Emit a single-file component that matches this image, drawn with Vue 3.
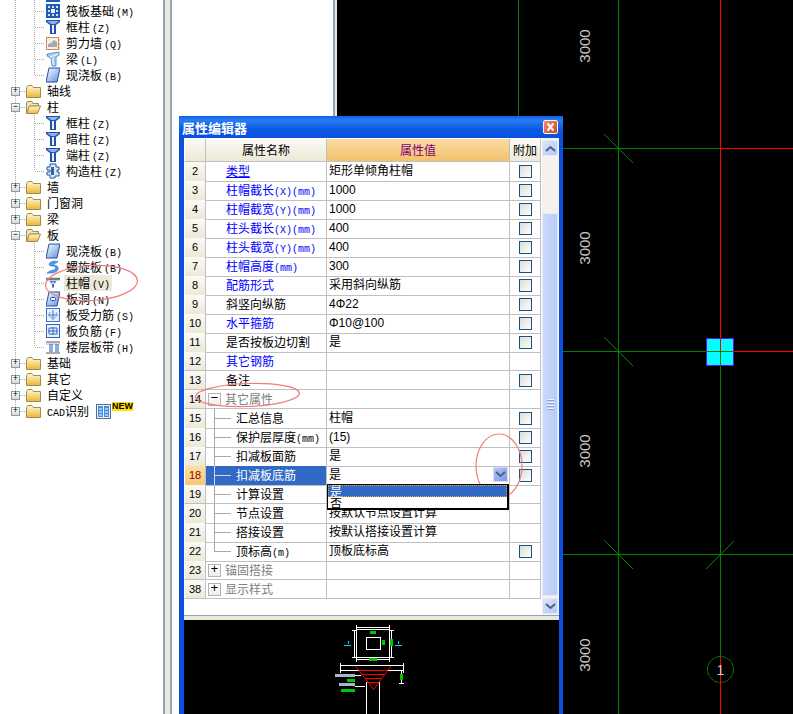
<script setup>
const tree = [
  { type: 'leaf', icon: 'raft', label: '' },
  { type: 'leaf', icon: 'raft', label: '筏板基础', key: '(M)' },
  { type: 'leaf', icon: 'col', label: '框柱', key: '(Z)' },
  { type: 'leaf', icon: 'wall', label: '剪力墙', key: '(Q)' },
  { type: 'leaf', icon: 'beam', label: '梁', key: '(L)' },
  { type: 'leaf', icon: 'slab', label: '现浇板', key: '(B)' },
  { type: 'folder', label: '轴线' },
  { type: 'folder', open: true, label: '柱' },
  { type: 'leaf', icon: 'col', label: '框柱', key: '(Z)' },
  { type: 'leaf', icon: 'col', label: '暗柱', key: '(Z)' },
  { type: 'leaf', icon: 'col', label: '端柱', key: '(Z)' },
  { type: 'leaf', icon: 'constr', label: '构造柱', key: '(Z)' },
  { type: 'folder', label: '墙' },
  { type: 'folder', label: '门窗洞' },
  { type: 'folder', label: '梁' },
  { type: 'folder', open: true, label: '板' },
  { type: 'leaf', icon: 'slab', label: '现浇板', key: '(B)' },
  { type: 'leaf', icon: 'spiral', label: '螺旋板', key: '(B)' },
  { type: 'leaf', icon: 'cap', label: '柱帽', key: '(V)', selected: true },
  { type: 'leaf', icon: 'hole', label: '板洞', key: '(N)' },
  { type: 'leaf', icon: 'rebar', label: '板受力筋', key: '(S)' },
  { type: 'leaf', icon: 'neg', label: '板负筋', key: '(F)' },
  { type: 'leaf', icon: 'band', label: '楼层板带', key: '(H)' },
  { type: 'folder', label: '基础' },
  { type: 'folder', label: '其它' },
  { type: 'folder', label: '自定义' },
  { type: 'folder', prefix: 'CAD', label: '识别', isNew: true }
]

// y centre of each tree row, used for the dotted connectors
const rowY = (i) => i * 16 - 5
const leafRows = tree.map((t, i) => (t.type === 'leaf' ? rowY(i) : null)).filter((v) => v !== null && v > 0)
const folderRows = tree.map((t, i) => (t.type === 'folder' ? rowY(i) : null)).filter((v) => v !== null)

const rows = [
  { no: 2, name: '类型', link: true, under: true, val: '矩形单倾角柱帽', chk: true },
  { no: 3, name: '柱帽截长', unit: '(X)(mm)', link: true, val: '1000', chk: true },
  { no: 4, name: '柱帽截宽', unit: '(Y)(mm)', link: true, val: '1000', chk: true },
  { no: 5, name: '柱头截长', unit: '(X)(mm)', link: true, val: '400', chk: true },
  { no: 6, name: '柱头截宽', unit: '(Y)(mm)', link: true, val: '400', chk: true },
  { no: 7, name: '柱帽高度', unit: '(mm)', link: true, val: '300', chk: true },
  { no: 8, name: '配筋形式', link: true, val: '采用斜向纵筋', chk: true },
  { no: 9, name: '斜竖向纵筋', val: '4Φ22', chk: true },
  { no: 10, name: '水平箍筋', link: true, val: 'Φ10@100', chk: true },
  { no: 11, name: '是否按板边切割', val: '是', chk: true },
  { no: 12, name: '其它钢筋', link: true, val: '' },
  { no: 13, name: '备注', val: '', chk: true },
  { no: 14, name: '其它属性', group: '−', val: '' },
  { no: 15, name: '汇总信息', child: true, val: '柱帽', chk: true },
  { no: 16, name: '保护层厚度', unit: '(mm)', child: true, val: '(15)', chk: true },
  { no: 17, name: '扣减板面筋', child: true, val: '是', chk: true },
  { no: 18, name: '扣减板底筋', child: true, val: '是', chk: true, active: true },
  { no: 19, name: '计算设置', child: true, val: '' },
  { no: 20, name: '节点设置', child: true, val: '按默认节点设置计算', under_drop: true },
  { no: 21, name: '搭接设置', child: true, val: '按默认搭接设置计算' },
  { no: 22, name: '顶标高', unit: '(m)', child: true, last: true, val: '顶板底标高', chk: true },
  { no: 23, name: '锚固搭接', group: '+', val: '' },
  { no: 38, name: '显示样式', group: '+', val: '' }
]

const dimTexts = [46, 248, 451, 655]
const ticks = [
  [604, 134, 633, 163],
  [604, 337, 633, 366],
  [604, 540, 633, 569],
  [706, 569, 734, 541]
]
</script>

<template>
  <div class="screen">
    <svg class="sprite" width="0" height="0" aria-hidden="true">
      <defs>
        <linearGradient id="gBlue" x1="0" y1="0" x2="1" y2="0">
          <stop offset="0" stop-color="#1f4fa8" />
          <stop offset="0.5" stop-color="#d9e6fb" />
          <stop offset="1" stop-color="#1f4fa8" />
        </linearGradient>
        <linearGradient id="gSlab" x1="0" y1="0" x2="1" y2="1">
          <stop offset="0" stop-color="#ffffff" />
          <stop offset="1" stop-color="#5d8fe0" />
        </linearGradient>
        <linearGradient id="gFolder" x1="0" y1="0" x2="0" y2="1">
          <stop offset="0" stop-color="#fff8d8" />
          <stop offset="1" stop-color="#eeb730" />
        </linearGradient>
      </defs>
      <symbol id="i-raft" viewBox="0 0 14 16">
        <rect x="0" y="1" width="14" height="14" fill="#1d5cb0" />
        <rect x="2" y="3" width="2" height="2" fill="#cfe0f8" /><rect x="6" y="3" width="2" height="2" fill="#cfe0f8" /><rect x="10" y="3" width="2" height="2" fill="#cfe0f8" />
        <rect x="2" y="7" width="2" height="2" fill="#cfe0f8" /><rect x="5" y="6" width="4" height="4" fill="#eaf2ff" /><rect x="10" y="7" width="2" height="2" fill="#cfe0f8" />
        <rect x="2" y="11" width="2" height="2" fill="#cfe0f8" /><rect x="6" y="11" width="2" height="2" fill="#cfe0f8" /><rect x="10" y="11" width="2" height="2" fill="#cfe0f8" />
      </symbol>
      <symbol id="i-col" viewBox="0 0 14 16">
        <path d="M0 1H14V3L10 6V15H4V6L0 3Z" fill="#1f52ae" />
        <path d="M1 2H13L9 5H5Z" fill="#8fb2ea" />
        <rect x="6" y="6" width="2" height="8" fill="#e9f1fd" />
      </symbol>
      <symbol id="i-wall" viewBox="0 0 14 16">
        <rect x="0.5" y="2.5" width="12" height="12" fill="#f4f0e8" stroke="#d58a58" />
        <path d="M2 12L11 12L11 7L8 5L5 8L2 9Z" fill="#a9a9a9" />
        <path d="M12 5H14M12 9H14M12 13H14" stroke="#d07a30" />
      </symbol>
      <symbol id="i-beam" viewBox="0 0 14 16">
        <path d="M1 3L13 1V4L10 6V15H6L5 7L1 5Z" fill="#a8cdf2" stroke="#3d82c8" stroke-width="0.8" />
        <path d="M7 7V14M4 6L12 3" stroke="#ffffff" />
      </symbol>
      <symbol id="i-slab" viewBox="0 0 14 16">
        <path d="M3 1H14L11 15H0Z" fill="url(#gSlab)" stroke="#1d4fa8" />
      </symbol>
      <symbol id="i-constr" viewBox="0 0 14 16">
        <path d="M4 1H10V4H13V7H11V9H13V13H9V15H4V12H1V9H4V7H1V4H4Z" fill="#dfe9f8" stroke="#27549e" />
        <rect x="5" y="4" width="3" height="8" fill="#2c62b8" />
      </symbol>
      <symbol id="i-spiral" viewBox="0 0 16 16">
        <path d="M14 2C8 0 2 3 4 6C6 8 11 6 11 9C11 12 5 11 1 15C6 15 13 15 14 10C15 6 9 6 8 5C8 4 12 4 14 2Z" fill="#4f9be8" stroke="#1f62c0" stroke-width="0.6" />
      </symbol>
      <symbol id="i-cap" viewBox="0 0 16 16">
        <rect x="0" y="2" width="16" height="3" fill="#7a7a7a" />
        <path d="M4 6H12L9 9V13H7V9Z" fill="#2358b4" />
        <rect x="7" y="7" width="2" height="2" fill="#ffffff" />
      </symbol>
      <symbol id="i-hole" viewBox="0 0 14 16">
        <path d="M3 1H14L11 15H0Z" fill="url(#gSlab)" stroke="#1d4fa8" />
        <rect x="4.5" y="6.5" width="5" height="3" rx="1" fill="#ffffff" stroke="#1d4fa8" />
      </symbol>
      <symbol id="i-rebar" viewBox="0 0 14 16">
        <rect x="0.5" y="1.5" width="13" height="13" fill="#e8f0fc" stroke="#3b74c8" />
        <path d="M7 3V13M2 8H12" stroke="#3b74c8" />
        <path d="M4 5C2 8 4 11 7 11C10 11 12 8 10 5" fill="none" stroke="#7da3dc" />
      </symbol>
      <symbol id="i-neg" viewBox="0 0 14 16">
        <rect x="0.5" y="1.5" width="13" height="13" fill="#e8f0fc" stroke="#2f67c0" />
        <path d="M2 8H12M7 4V12M3 5H11V11H3Z" fill="none" stroke="#2f67c0" />
      </symbol>
      <symbol id="i-band" viewBox="0 0 14 16">
        <path d="M0 3H14M0 14H14" stroke="#555555" />
        <path d="M0 5H14" stroke="#9ab4d8" />
        <path d="M4 5V13M10 5V13M6 5V13M12 5V13" stroke="#1d5cb0" />
      </symbol>
      <symbol id="i-grid" viewBox="0 0 15 15">
        <rect x="0.5" y="0.5" width="14" height="14" fill="#eef3fb" stroke="#5a6b80" />
        <rect x="2" y="2" width="5" height="11" fill="#3f8fe8" /><rect x="8" y="2" width="5" height="11" fill="#3f8fe8" />
        <path d="M3 5H6M3 8H6M3 11H6M9 5H12M9 8H12M9 11H12" stroke="#ffffff" />
      </symbol>
      <symbol id="i-chev" viewBox="0 0 11 7">
        <path d="M1 1L5.5 5L10 1" fill="none" stroke="#4d6185" stroke-width="2" />
      </symbol>
    </svg>

    <div class="panel tree-panel">
      <svg class="tree-lines" width="164" height="430">
        <path d="M15.5 0V411M34.5 0V75M34.5 107V171M34.5 235V347" stroke="#a8a8a8" stroke-dasharray="1 1" fill="none" />
        <path v-for="y in leafRows" :key="'l' + y" :d="`M35 ${y + 0.5}H45`" stroke="#a8a8a8" stroke-dasharray="1 1" />
        <path v-for="y in folderRows" :key="'f' + y" :d="`M20 ${y + 0.5}H26`" stroke="#a8a8a8" stroke-dasharray="1 1" />
      </svg>
      <ul class="tree">
        <li v-for="(t, i) in tree" :key="i" class="node" :class="t.type">
          <template v-if="t.type === 'folder'">
            <span class="expander">{{ t.open ? '−' : '+' }}</span>
            <svg class="folder-icon" width="15" height="14" viewBox="0 0 15 14">
              <path v-if="!t.open" d="M0.5 3.5L2 1.5H6L7.5 3.5H14.5V13.5H0.5Z" fill="url(#gFolder)" stroke="#a08a50" />
              <template v-else>
                <path d="M0.5 2.5L2 1.5H6L7 3.5H12.5V6H3.5L0.5 13Z" fill="#f2e4b4" stroke="#a08a50" />
                <path d="M0.5 13.5L3.5 6H14.5L11.5 13.5Z" fill="url(#gFolder)" stroke="#a08a50" />
              </template>
            </svg>
          </template>
          <svg v-else class="leaf-icon" width="14" height="16"><use :href="'#i-' + t.icon" /></svg>
          <span v-if="t.label" class="label" :class="{ selected: t.selected }"><span v-if="t.prefix" class="prefix">{{ t.prefix }}</span>{{ t.label }}<span v-if="t.key" class="latin">{{ t.key }}</span></span>
          <template v-if="t.isNew">
            <svg class="new-grid" width="15" height="15"><use href="#i-grid" /></svg>
            <span class="new-tag">NEW</span>
          </template>
        </li>
      </ul>
    </div>
    <div class="splitter wide"></div>
    <div class="panel mid-panel"></div>
    <div class="splitter"></div>

    <div class="cad">
      <svg class="cad-lines" width="456" height="714" viewBox="337 0 456 714">
        <g shape-rendering="crispEdges" fill="none">
          <path d="M518.5 0V714M618.5 0V714" stroke="#008000" />
          <path d="M337 148.5H720M337 351.5H733M337 554.5H793M720.5 365V656" stroke="#008000" />
          <path d="M720 148.5H793M733 351.5H793M720.5 0V338M720.5 656V714" stroke="#ff0000" />
        </g>
        <path v-for="(d, i) in ticks" :key="i" :d="`M${d[0]} ${d[1]}L${d[2]} ${d[3]}`" stroke="#008000" fill="none" />
        <rect x="706.5" y="338.5" width="27" height="27" fill="#00ffff" stroke="#8000ff" />
        <path d="M720.5 339V351.5" stroke="#ff0000" shape-rendering="crispEdges" />
        <path d="M707 351.5H733M720.5 351.5V365" stroke="#008000" shape-rendering="crispEdges" />
        <circle cx="720.5" cy="669.5" r="13" fill="none" stroke="#008000" stroke-dasharray="5 0.6" />
        <text x="720.5" y="675" class="cad-num" font-size="14">1</text>
        <text
          v-for="y in dimTexts"
          :key="y"
          class="cad-num"
          font-size="15"
          :transform="`translate(590 ${y}) rotate(-90)`"
        >3000</text>
      </svg>
    </div>

    <section class="dialog">
      <header class="titlebar">
        <span class="title">属性编辑器</span>
        <button class="close">
          <svg width="13" height="12" viewBox="0 0 13 12"><path d="M3.5 2.5L9.5 9.5M9.5 2.5L3.5 9.5" stroke="#ffffff" stroke-width="2" /></svg>
        </button>
      </header>
      <div class="client">
        <div class="grid-area">
          <div class="grid">
            <div class="row head">
              <div class="cell no"></div>
              <div class="cell hname">属性名称</div>
              <div class="cell hval">属性值</div>
              <div class="cell hadd">附加</div>
            </div>
            <div v-for="r in rows" :key="r.no" class="row" :class="{ active: r.active }">
              <div class="cell no">{{ r.no }}</div>
              <div class="cell name" :class="{ link: r.link, child: r.child, last: r.last, group: r.group }">
                <span v-if="r.group" class="box">{{ r.group }}</span>
                <span :class="{ under: r.under }">{{ r.name }}</span><span v-if="r.unit" class="latin">{{ r.unit }}</span>
              </div>
              <div class="cell val" :class="{ clipped: r.under_drop }">
                {{ r.val }}
                <template v-if="r.active">
                  <span class="drop-btn"><svg width="11" height="7"><use href="#i-chev" /></svg></span>
                  <div class="dropdown">
                    <div class="opt on">是</div>
                    <div class="opt">否</div>
                  </div>
                </template>
              </div>
              <div class="cell add"><span v-if="r.chk" class="chk"></span></div>
            </div>
          </div>
          <div class="scroll">
            <span class="sbtn"><svg width="11" height="7" class="flip"><use href="#i-chev" /></svg></span>
            <div class="thumb"><i></i><i></i><i></i><i></i></div>
            <span class="sbtn"><svg width="11" height="7"><use href="#i-chev" /></svg></span>
          </div>
        </div>
        <div class="preview">
          <svg width="375" height="94" viewBox="184 620 375 94" shape-rendering="crispEdges">
            <g fill="none" stroke="#ffffff">
              <rect x="356.5" y="629.5" width="33" height="28" />
              <rect x="366.5" y="637.5" width="14" height="12" />
              <path d="M356 627.5H389M356 625V630M389 625V630M354.5 630V657M352 630H357M352 657H357" />
              <path d="M391.5 630V657M389 630H394M389 657H394M356 659.5H389M356 657V662M389 657V662" />
              <path d="M340 665.5H404M340 670.5H404M340.5 663V673M403.5 663V673M366.5 682V714M379.5 682V714" />
              <path d="M355 675.5H361M355 686.5H365M401.5 670V683M399 683.5H404" />
            </g>
            <g fill="none" stroke="#ff0000">
              <path d="M355.5 666L373.5 689.5L391 666" shape-rendering="auto" />
              <path d="M359 670.5H388M362 674.5H385M365 678.5H382M367 682.5H379" />
            </g>
            <g fill="#00c800">
              <rect x="370" y="631" width="6" height="3" />
              <rect x="382" y="640" width="3" height="5" />
              <rect x="390" y="639" width="3" height="7" />
              <rect x="369" y="658" width="8" height="3" />
              <rect x="400" y="674" width="3" height="6" />
              <rect x="347" y="679" width="8" height="3" />
              <rect x="341" y="689" width="14" height="3" />
            </g>
            <rect x="335" y="674" width="20" height="3" fill="#a9b6c4" />
            <rect x="339" y="683" width="16" height="3" fill="#a9b6c4" />
            <path d="M348 641V644M344 645.5H351M398 641V644M395 645.5H402" stroke="#00e0e0" fill="none" />
          </svg>
        </div>
      </div>
    </section>

    <svg class="marks" width="793" height="714">
      <g fill="none" stroke="#f27c7c" stroke-width="1.2">
        <ellipse cx="91.5" cy="283" rx="46" ry="17.5" transform="rotate(-3 91.5 283)" />
        <ellipse cx="247.5" cy="395" rx="52" ry="11.5" transform="rotate(-2 247.5 395)" />
        <ellipse cx="499" cy="466" rx="23" ry="32" />
      </g>
    </svg>
  </div>
</template>

<style>
html, body {
  margin: 0;
  background: #fff;
  overflow: hidden;
}
</style>

<style scoped>
.screen {
  position: relative;
  display: flex;
  width: 793px;
  height: 714px;
  overflow: hidden;
  font: 12px "Noto Sans CJK SC", "Liberation Sans", sans-serif;
  color: #000;
  background: #fff;
}
.sprite {
  position: absolute;
}
.panel {
  background: #fff;
  box-sizing: border-box;
  height: 100%;
}
.tree-panel {
  position: relative;
  width: 165px;
  border-right: 2px solid #8ea4c0;
  overflow: hidden;
}
.mid-panel {
  width: 165px;
  border-left: 2px solid #8ea4c0;
  border-right: 2px solid #8ea4c0;
}
.splitter {
  width: 2px;
  background: #ece9d8;
}
.splitter.wide {
  width: 5px;
}
.tree-lines {
  position: absolute;
  left: 0;
  top: 0;
}
.tree {
  position: relative;
  list-style: none;
  margin: -13px 0 0;
  padding: 0;
}
.node {
  display: flex;
  align-items: center;
  height: 16px;
  white-space: nowrap;
}
.node.leaf {
  padding-left: 46px;
}
.node.folder {
  padding-left: 11px;
}
.leaf-icon {
  flex: none;
}
.expander {
  flex: none;
  box-sizing: border-box;
  width: 9px;
  height: 9px;
  border: 1px solid #8a9bb0;
  background: linear-gradient(#fff, #dcd8c8);
  font: 9px/7px "Liberation Mono", monospace;
  text-align: center;
  margin-right: 6px;
}
.folder-icon {
  flex: none;
}
.label {
  height: 16px;
  line-height: 15px;
  padding: 0 2px;
  margin-left: 4px;
}
.folder .label {
  margin-left: 4px;
}
.label.selected {
  background: #ece9d8;
}
.prefix {
  font: 10px "Liberation Mono", monospace;
}
.latin {
  font: 10px "Liberation Mono", monospace;
}
.label .latin {
  margin-left: 2px;
}
.new-grid {
  flex: none;
  margin-left: 5px;
  margin-top: 1px;
}
.new-tag {
  align-self: flex-start;
  margin-top: -1px;
  margin-left: 1px;
  background: #ffe000;
  font: bold 9px/9px "Liberation Sans", sans-serif;
}
.cad {
  flex: 1;
  background: #000;
  overflow: hidden;
}
.cad-lines {
  display: block;
}
.cad-num {
  fill: #c8c8c8;
  font-family: "Liberation Sans", sans-serif;
  text-anchor: middle;
}
.dialog {
  position: absolute;
  left: 179px;
  top: 116px;
  box-sizing: border-box;
  display: flex;
  flex-direction: column;
  width: 384px;
  height: 598px;
  padding: 0 4px 0 5px;
  background: linear-gradient(90deg, #0a3fc4, #0a56ee 2px, #0a50e0 4px);
  background-color: #0a50e0;
}
.titlebar {
  display: flex;
  align-items: center;
  justify-content: space-between;
  flex: none;
  height: 22px;
  margin: 0 -4px 0 -5px;
  padding: 0 5px 0 3px;
  background: linear-gradient(#0d5fe6, #2a7bf2 18%, #0a5ae6 60%, #0a4fdc);
}
.title {
  color: #fff;
  font-size: 13px;
  font-weight: 700;
}
.close {
  display: flex;
  align-items: center;
  justify-content: center;
  width: 13px;
  height: 12px;
  padding: 0;
  border: 1px solid #f4f4f4;
  border-radius: 2px;
  box-sizing: content-box;
  background: linear-gradient(135deg, #ec9070, #d8431c);
}
.client {
  flex: 1;
  display: flex;
  flex-direction: column;
  min-height: 0;
  background: #ece9d8;
}
.grid-area {
  flex: none;
  display: flex;
  height: 478px;
  box-sizing: border-box;
  background: #fff;
  border-bottom: 1px solid #8ea4b8;
}
.grid {
  width: 358px;
  flex: none;
}
.row {
  display: grid;
  grid-template-columns: 22px 121px 183px 31px;
  height: 19px;
}
.row.head {
  height: 24px;
  padding-top: 1px;
  box-sizing: border-box;
}
.cell {
  box-sizing: border-box;
  border-right: 1px solid #c0c0c0;
  border-bottom: 1px solid #c0c0c0;
  line-height: 18px;
  white-space: nowrap;
  min-width: 0;
}
.head .cell {
  line-height: 22px;
  text-align: center;
}
.no {
  border-left: 1px solid #fff;
  background: linear-gradient(#fbfaf6, #ece9d8);
  text-align: center;
  font: 11px/18px "Liberation Sans", sans-serif;
}
.head .no {
  border-bottom-color: #c0c0c0;
}
.hname,
.hadd {
  background: linear-gradient(#fbfaf6, #ece9d8);
}
.hval {
  background: linear-gradient(#fbdca2, #f3c26c);
  color: #800080;
}
.name {
  padding-left: 20px;
}
.name.link {
  color: #0000ff;
}
.under {
  text-decoration: underline;
}
.name.child {
  padding-left: 30px;
  background:
    linear-gradient(#a8a8a8, #a8a8a8) 8px 0 / 1px 100% no-repeat,
    linear-gradient(#a8a8a8, #a8a8a8) 8px 9px / 17px 1px no-repeat;
}
.name.child.last {
  background:
    linear-gradient(#a8a8a8, #a8a8a8) 8px 0 / 1px 10px no-repeat,
    linear-gradient(#a8a8a8, #a8a8a8) 8px 9px / 17px 1px no-repeat;
}
.name.group {
  display: flex;
  align-items: center;
  padding-left: 2px;
  color: #808080;
}
.box {
  flex: none;
  box-sizing: border-box;
  width: 13px;
  height: 13px;
  margin-right: 4px;
  border: 1px solid #b4b4b4;
  background: linear-gradient(#fff, #eeeee8);
  color: #000;
  text-align: center;
  font: 13px/10px "Liberation Mono", monospace;
}
.active .no {
  background: linear-gradient(#fce0a4, #f6c878);
  color: #900000;
}
.active .name.child {
  background-color: #316ac5;
  background-image: linear-gradient(#d0d8e8, #d0d8e8), linear-gradient(#d0d8e8, #d0d8e8);
  color: #fff;
}
.val {
  position: relative;
  padding-left: 2px;
  line-height: 19px;
  font-family: "Liberation Sans", "Noto Sans CJK SC", sans-serif;
}
.drop-btn {
  position: absolute;
  right: 1px;
  top: 1px;
  display: flex;
  align-items: center;
  justify-content: center;
  width: 15px;
  height: 15px;
  background: linear-gradient(135deg, #b4c4f4, #7f98e8);
  border: 1px solid #d8e0f8;
  box-sizing: border-box;
}
.dropdown {
  position: absolute;
  left: 0;
  top: 18px;
  z-index: 2;
  box-sizing: border-box;
  width: 182px;
  height: 26px;
  background: #fff;
  border: 1px solid #000;
  border-right-width: 2px;
  border-bottom-width: 2px;
  line-height: 12px;
  font-family: "Noto Sans CJK SC", sans-serif;
}
.opt {
  height: 12px;
  padding-left: 2px;
}
.opt.on {
  background: #316ac5;
  color: #fff;
  outline: 1px dotted #e8a030;
  outline-offset: -1px;
}
.add {
  padding: 3px 0 0 9px;
}
.chk {
  display: block;
  box-sizing: border-box;
  width: 13px;
  height: 13px;
  border: 1px solid #1c5180;
  background: linear-gradient(135deg, #dcdcd7, #ffffff);
}
.scroll {
  flex: 1;
  display: flex;
  flex-direction: column;
  box-sizing: border-box;
  padding: 2px 1px 1px 0;
  background: #f4f2ea;
}
.sbtn {
  flex: none;
  display: flex;
  align-items: center;
  justify-content: center;
  box-sizing: border-box;
  height: 16px;
  border: 1px solid #e4ecfb;
  border-radius: 2px;
  background: linear-gradient(135deg, #dbe5fb, #b4c6f4);
}
.flip {
  transform: scaleY(-1);
}
.thumb {
  flex: 1;
  display: flex;
  flex-direction: column;
  align-items: center;
  justify-content: center;
  gap: 1px;
  margin: 57px 0 2px;
  box-sizing: border-box;
  border: 1px solid #e4ecfb;
  border-radius: 2px;
  background: linear-gradient(90deg, #cad8fa, #b9cbf6);
}
.thumb i {
  display: block;
  width: 7px;
  height: 1px;
  background: #eef3fd;
  border-bottom: 1px solid #8ca2d4;
}
.preview {
  flex: 1;
  margin-top: 4px;
  background: #000;
  overflow: hidden;
}
.preview svg {
  display: block;
}
.marks {
  position: absolute;
  left: 0;
  top: 0;
  pointer-events: none;
}
</style>
